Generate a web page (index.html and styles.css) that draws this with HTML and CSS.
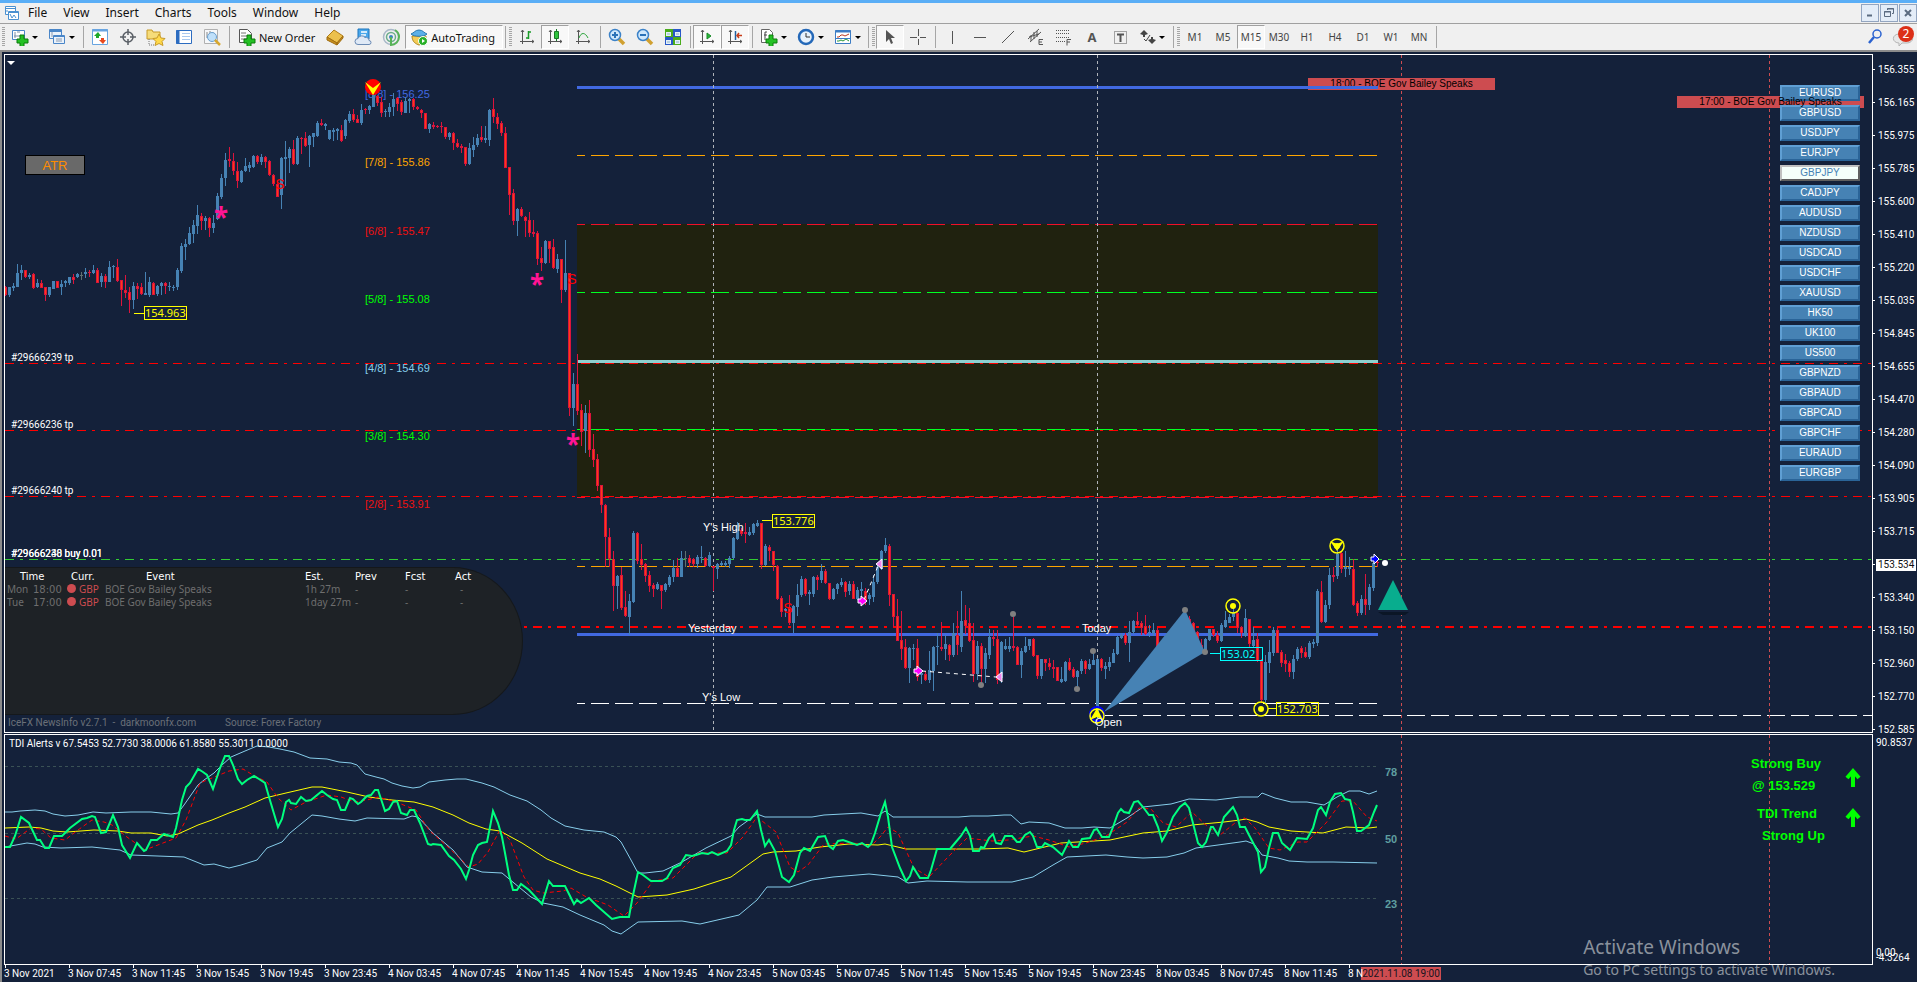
FILE: index.html
```html
<!DOCTYPE html>
<html lang="en">
<head>
<meta charset="utf-8">
<title>GBPJPY, M15</title>
<link rel="stylesheet" href="styles.css">
</head>
<body>
<header class="menubar">
  <svg class="app-icon" width="16" height="16" viewBox="0 0 16 16" fill="none" stroke="#4a90d0"><path d="M1.500 1.500h10v8h-10zM1 3.500h11" fill="#fff"/><path d="M4.500 6.500h10v8h-10z" fill="#fff"/><path d="M4.500 7.500h10M6 9l2 4 2-3 2 3M3 5v2"/></svg>
  <nav class="menu">
    <a href="#">File</a><a href="#">View</a><a href="#">Insert</a><a href="#">Charts</a><a href="#">Tools</a><a href="#">Window</a><a href="#">Help</a>
  </nav>
  <div class="window-buttons">
    <button aria-label="Minimize"><svg width="12" height="12"><path d="M3 8.500h5" stroke="#5b6b80" stroke-width="2"/></svg></button>
    <button aria-label="Restore"><svg width="12" height="12" fill="none" stroke="#5b6b80"><path d="M4.500 3V1.500h6v5H9M4 2h7M1.500 4.500h6v5h-6zM1 5h7"/></svg></button>
    <button aria-label="Close"><svg width="12" height="12"><path d="M3 3l6 6M9 3l-6 6" stroke="#5b6b80" stroke-width="2"/></svg></button>
  </div>
</header>

<div class="toolbar">
  <i class="grip"></i>
  <button class="tool drop" aria-label="New chart"><svg width="18" height="18"><path d="M1.500 2.500h12v9h-12z" fill="#fff" stroke="#4a86c8"/><path d="M4 4v6M3 8h7M6 4h3" stroke="#7a8ea8"/><path d="M9 7h4v4h4v4h-4v4H9v-4H6v-4h3z" fill="#24c024" stroke="#0a7a0a"/></svg></button>
  <button class="tool drop" aria-label="Profiles"><svg width="18" height="18" fill="#eaf2fb" stroke="#4a86c8"><path d="M1.500 1.500h12v9h-12z"/><path d="M1 3h13" stroke-width="2"/><path d="M5.500 7.500h11v8h-11z"/><path d="M5 8.500h12" /><path d="M4 4v5M8 11h6M8 13h6" stroke="#8a9ab0"/></svg></button>
  <i class="sep"></i>
  <button class="tool" aria-label="Market Watch"><svg width="18" height="18"><path d="M1.500 1.500h15v15h-15z" fill="#fff" stroke="#68a4e0"/><path d="M1 2.500h16" stroke="#68a4e0" stroke-width="2"/><path d="M7 4l3 4H8v2H5V8H3z" fill="#1fa82a"/><path d="M12 16l3-4h-2v-2h-3v2H8z" fill="#e8491e"/></svg></button>
  <button class="tool" aria-label="Data Window"><svg width="18" height="18" fill="none" stroke="#5a5f66" stroke-width="1.500"><circle cx="9" cy="9" r="5"/><path d="M9 1v6M9 11v6M1 9h6M11 9h6"/></svg></button>
  <button class="tool" aria-label="Navigator"><svg width="20" height="18"><path d="M1 5V2h5l1 2h7v7H1z" fill="#f6dc7a" stroke="#c79a28"/><path d="M3 11v6h5" stroke="#777" stroke-dasharray="1 1" fill="none"/><path d="M13 6l2 4 4 .5-3 3 1 4-4-2-4 2 1-4-3-3 4-.5z" fill="#ffd94a" stroke="#c79a28"/></svg></button>
  <button class="tool" aria-label="Terminal"><svg width="18" height="18"><path d="M1.500 2.500h15v13h-15z" fill="#fff" stroke="#2c6cc0"/><path d="M3 2v14" stroke="#2c6cc0" stroke-width="3"/><path d="M7 5.500h8M7 8.500h8M7 11.500h8" stroke="#a9c8ee"/></svg></button>
  <button class="tool" aria-label="Strategy Tester"><svg width="18" height="18"><path d="M1.500 1.500h13v14h-13z" fill="#f6f8fa" stroke="#b0b0b0"/><path d="M4 4v6M7 3v5M10 4v4" stroke="#888"/><circle cx="9" cy="9" r="4.500" fill="#bfe0fa" stroke="#6aa0d0"/><path d="M12 12l5 5" stroke="#d8a830" stroke-width="2.500"/></svg></button>
  <i class="sep"></i>
  <button class="tool wide"><svg width="18" height="18"><path d="M1.500 1.500h8l4 4v9h-12z" fill="#fff" stroke="#555"/><path d="M3 5h5M3 8h8M3 11h6" stroke="#777"/><path d="M9 7h4v4h4v4h-4v4H9v-4H6v-4h3z" fill="#24c024" stroke="#0a7a0a"/></svg>New Order</button>
  <button class="tool" aria-label="MetaEditor"><svg width="18" height="18"><path d="M1 9l7-7 9 6-6 7z" fill="#ecc04c" stroke="#b07c18"/><path d="M1 9v3l10 5v-2zM11 17l6-7V8l-6 7z" fill="#c8901e" stroke="#a06c10"/></svg></button>
  <button class="tool" aria-label="Market"><svg width="18" height="18"><path d="M4 1h11v10H4z" fill="#4aa8ec" stroke="#1c74bc"/><path d="M7 4h6M7 7h5" stroke="#fff" stroke-width="1.500"/><path d="M4 16.500a3 3 0 010-6 4 4 0 017-1 3 3 0 014 3 2 2 0 010 4z" fill="#dfe9f6" stroke="#6a8ab4"/></svg></button>
  <button class="tool" aria-label="Signals"><svg width="18" height="18" fill="none" stroke-width="1.500"><circle cx="9" cy="9" r="7.500" stroke="#a8b8c8"/><circle cx="9" cy="9" r="4.500" stroke="#6cae8c"/><circle cx="9" cy="9" r="2" fill="#3a80c0"/><path d="M9 9v8a8 8 0 008-8 8 8 0 00-4-7" stroke="#58b458" stroke-width="2"/></svg></button>
  <button class="tool wide auto pressed"><svg width="18" height="18"><path d="M2 8c0 6 4 8 7 9 4-1 7-4 7-9z" fill="#f4cc58" stroke="#b08820"/><path d="M1 6c3-1 4-4 8-4s5 3 8 4c-3 3-13 3-16 0z" fill="#5cb0e8" stroke="#2878b0"/><circle cx="13" cy="13" r="4.500" fill="#28b028" stroke="#fff"/><path d="M12 11v4l3-2z" fill="#fff"/></svg>AutoTrading</button>
  <i class="sep"></i>
  <i class="grip"></i>
  <button class="tool" aria-label="Bar chart"><svg width="16" height="16" fill="none" stroke="#555"><path d="M3.500 1v14M1 12.500h14M2 3l1.500-2L5 3M13 11l2 1.500-2 1.500"/><path d="M9.500 2v8M7 9h2.500M9.500 3H12" stroke="#1a9a28" stroke-width="1.500"/></svg></button>
  <button class="tool pressed" aria-label="Candlesticks"><svg width="16" height="16" fill="none" stroke="#555"><path d="M3.500 1v14M1 12.500h14M2 3l1.500-2L5 3M13 11l2 1.500-2 1.500"/><path d="M9.500 0v12" stroke="#1a7a28"/><path d="M7.500 2.500h4v7h-4z" fill="#2fc43c" stroke="#1a7a28"/></svg></button>
  <button class="tool" aria-label="Line chart"><svg width="16" height="16" fill="none" stroke="#555"><path d="M3.500 1v14M1 12.500h14M2 3l1.500-2L5 3M13 11l2 1.500-2 1.500"/><path d="M4 9c2-6 6-6 9 0" stroke="#2aa43a"/></svg></button>
  <i class="sep"></i>
  <button class="tool" aria-label="Zoom in"><svg width="18" height="18"><path d="M10 10l6 6" stroke="#d0a030" stroke-width="3.500"/><circle cx="7" cy="7" r="5.500" fill="#cfe8fc" stroke="#3c82c8" stroke-width="1.500"/><path d="M4 7h6M7 4v6" stroke="#2a72b8" stroke-width="2"/></svg></button>
  <button class="tool" aria-label="Zoom out"><svg width="18" height="18"><path d="M10 10l6 6" stroke="#d0a030" stroke-width="3.500"/><circle cx="7" cy="7" r="5.500" fill="#cfe8fc" stroke="#3c82c8" stroke-width="1.500"/><path d="M4 7h6" stroke="#2a72b8" stroke-width="2"/></svg></button>
  <button class="tool" aria-label="Tile windows"><svg width="18" height="18"><path d="M1 1h8v8H1zM9 9h8v8H9z" fill="#4aac1c"/><path d="M9 1h8v8H9zM1 9h8v8H1z" fill="#2858c8"/><path d="M2 4h5v4H2zM11 4h5v4h-5zM2 12h5v4H2zM11 12h5v4h-5z" fill="#e4f0fa"/><path d="M3 6h3M12 6h3M3 14h3M12 14h3" stroke="#8ab0c8"/></svg></button>
  <i class="sep"></i>
  <button class="tool pressed" aria-label="Auto scroll"><svg width="16" height="16" fill="none" stroke="#555"><path d="M3.500 1v14M1 12.500h14M2 3l1.500-2L5 3M13 11l2 1.500-2 1.500"/><path d="M8 4v6l4-3z" fill="#28b838" stroke="#1a8a28"/></svg></button>
  <button class="tool pressed" aria-label="Chart shift"><svg width="16" height="16" fill="none" stroke="#555"><path d="M3.500 1v14M1 12.500h14M2 3l1.500-2L5 3M13 11l2 1.500-2 1.500"/><path d="M8.500 2v9" stroke="#2060a0" stroke-width="1.500"/><path d="M15 6.500h-5M12 4l-2 2.500 2 2.500" stroke="#c83c18" stroke-width="1.500"/></svg></button>
  <i class="sep"></i>
  <button class="tool drop" aria-label="Indicators"><svg width="18" height="18"><path d="M1.500 1.500h8l3 3v10h-11z" fill="#fff" stroke="#666"/><path d="M7 4H5v8M4 7h3" stroke="#444" fill="none"/><path d="M9 7h4v4h4v4h-4v4H9v-4H6v-4h3z" fill="#24c024" stroke="#0a7a0a"/></svg></button>
  <button class="tool drop" aria-label="Periodicity"><svg width="18" height="18"><circle cx="9" cy="9" r="7" fill="#e8f2fc" stroke="#2468b8" stroke-width="2.500"/><path d="M9 5v4h4" stroke="#333" fill="none"/></svg></button>
  <button class="tool drop" aria-label="Templates"><svg width="18" height="18" fill="none"><path d="M1.500 2.500h15v13h-15z" fill="#fff" stroke="#3c7cc4"/><path d="M1 3.500h16" stroke="#3c7cc4" stroke-width="2"/><path d="M3 9h2l2-2h2l2 1 4-2" stroke="#b83820"/><path d="M3 13h2l2-1 2 1 3-2 3 2" stroke="#289838"/><path d="M2 10.500h14" stroke="#3c7cc4"/></svg></button>
  <i class="sep"></i>
  <i class="grip"></i>
  <button class="tool pressed" aria-label="Cursor"><svg width="16" height="16"><path d="M4 1v12l3-3 2 5 2-1-2-5h4z" fill="#555"/></svg></button>
  <button class="tool" aria-label="Crosshair"><svg width="16" height="16" stroke="#555"><path d="M8.500 0v7M8.500 10v6M0 8.500h7M10 8.500h6"/></svg></button>
  <i class="sep"></i>
  <button class="tool" aria-label="Vertical line"><svg width="16" height="16" stroke="#555"><path d="M8.500 2v13"/></svg></button>
  <button class="tool" aria-label="Horizontal line"><svg width="16" height="16" stroke="#555"><path d="M2 8.500h12"/></svg></button>
  <button class="tool" aria-label="Trendline"><svg width="16" height="16" stroke="#555"><path d="M2 14L14 2"/></svg></button>
  <button class="tool" aria-label="Channel"><svg width="17" height="18" stroke="#555" fill="none"><path d="M1 11L12 1M3 14L14 4M4 7v6M7 4v7M10 3v6M2 9l10-3"/><path d="M16 11.500h-4v5h4M12 14h3"/></svg></button>
  <button class="tool" aria-label="Fibonacci"><svg width="17" height="18" stroke="#555" fill="none"><path d="M1 2.500h14M1 5.500h14M1 9.500h14M1 13.500h9" stroke-dasharray="1 1"/><path d="M16 11.500h-4v6M12 14h3"/></svg></button>
  <button class="tool letter">A</button>
  <button class="tool" aria-label="Text label"><svg width="16" height="16" stroke="#555" fill="none"><path d="M2.500 2.500h12v12h-12z" stroke-dasharray="1 1"/><path d="M5 5.500h7M8.500 5v8" stroke-width="2"/></svg></button>
  <button class="tool drop" aria-label="Arrows"><svg width="16" height="16" fill="#444"><path d="M0 5l4-4 4 4-3 1v2H3V6zM8 11l3-1V8h2v2l3 1-4 4z"/><path d="M4 10l2 2 4-6" fill="none" stroke="#444"/></svg></button>
  <i class="sep"></i>
  <i class="grip"></i>
  <button class="tool period">M1</button><button class="tool period">M5</button><button class="tool period pressed">M15</button><button class="tool period">M30</button><button class="tool period">H1</button><button class="tool period">H4</button><button class="tool period">D1</button><button class="tool period">W1</button><button class="tool period">MN</button>
  <i class="sep"></i>
  <div class="status">
    <button class="plain" aria-label="Search"><svg width="16" height="16" fill="none" stroke="#2a62d0"><circle cx="10" cy="5" r="4" stroke-width="1.500"/><path d="M7 8l-5 6" stroke-width="2.500"/></svg></button>
    <button class="plain" aria-label="Messages"><svg width="26" height="22"><path d="M8 20v-3a5 4 0 010-9h8a5 4 0 010 9h-5z" fill="#e8e8e8" stroke="#b4b4b4"/><circle cx="15" cy="8" r="8" fill="#dc3018"/><text class="badge" x="15" y="12">2</text></svg></button>
  </div>
</div>

<main class="workspace">
  <section class="pane main-pane">
    <div class="event event-today"><span>18:00 - BOE Gov Bailey Speaks</span></div>
    <svg class="plot"><g transform="translate(-5 -55)">
      <rect x="577" y="224" width="801" height="273" fill="#20220f"/>
      <g class="crisp" fill="none">
        <g class="dashdot">
          <path d="M5 363H1872M5 430H1872M5 496H1872" stroke="#f00"/>
          <path d="M5 559H1872" stroke="#32cd32"/>
          <path d="M5 627H1872" stroke="#f00" stroke-width="2"/>
        </g>
        <g class="levels">
          <path d="M577 155H1378M577 566H1378" stroke="#ffa500"/>
          <path d="M577 224H1378M577 497H1378" stroke="#f01028"/>
          <path d="M577 292H1378M577 429H1378" stroke="#0f2"/>
          <path d="M577 703H1378M1105 715H1872" stroke="#fff"/>
        </g>
        <path class="solid" d="M577 87H1378M577 634H1378" stroke="#4169e1"/>
        <path class="solid" d="M577 361H1378" stroke="#8fcfcf"/>
        <path class="day" d="M713 55V732M1097 55V732" stroke="#b0b4ba"/>
        <path class="day" d="M1401 55V732M1769 55V732" stroke="#cd4c50"/>
      </g>
      <g class="level-text">
        <text x="365" y="98" fill="#4169e1">[8/8] - 156.25</text>
        <text x="365" y="166" fill="#ffa500">[7/8] - 155.86</text>
        <text x="365" y="235" fill="#f01010">[6/8] - 155.47</text>
        <text x="365" y="303" fill="#0f0">[5/8] - 155.08</text>
        <text x="365" y="372" fill="#87ceeb">[4/8] - 154.69</text>
        <text x="365" y="440" fill="#0f0">[3/8] - 154.30</text>
        <text x="365" y="508" fill="#f01010">[2/8] - 153.91</text>
      </g>
      <g id="candles" class="crisp"></g>
      <path d="M1185 610L1205 652L1104 712z" fill="#4682b4"/>
      <g class="crisp" fill="none" stroke="#ff0">
        <path d="M134 313h10M144 306h42v13h-42zM762 520h10M772 514h42v13h-42zM1268 708h8M1276 702h42v13h-42z"/>
        <path d="M1210 653h10M1220 647h42v13h-42z" stroke="#0ff"/>
      </g>
      <g class="tag" fill="#ff0">
        <text x="145" y="317">154.963</text><text x="773" y="525">153.776</text><text x="1277" y="713">152.703</text>
        <text x="1221" y="658" fill="#0ff">153.02</text>
      </g>
      <g class="star"><text x="221" y="227">*</text><text x="537" y="294">*</text><text x="573" y="454">*</text></g>
      <g class="sell"><text x="280" y="189">S</text><text x="572" y="284">S</text><text x="788" y="613">S</text></g>
      <circle cx="373" cy="87" r="8" fill="#f00"/><path d="M365 82l8 13 8-13-8 6z" fill="#ff0"/>
      <g fill="none" stroke="#fff" stroke-dasharray="4 4"><path d="M864 600L878 566M922 671L996 677"/></g>
      <g fill="#f0f" stroke="#fff"><path d="M858 599h3v-3l6 5-6 5v-3h-3zM914 669h3v-3l6 5-6 5v-3h-3z"/>
        <path d="M882 559v10l-6-5zM1002 672v10l-6-5z" fill="#ee82ee"/><path d="M1371 557h3v-3l5 5-5 5v-3h-3z" fill="#00f"/></g>
      <g fill="#808080"><circle cx="1013" cy="614" r="3"/><circle cx="981" cy="685" r="3"/><circle cx="1093" cy="651" r="3"/><circle cx="1077" cy="689" r="3"/><circle cx="1185" cy="610" r="3"/><circle cx="1205" cy="652" r="3"/></g>
      <circle cx="1097" cy="714" r="7" fill="none" stroke="#00f" stroke-width="2"/>
      <g fill="none" stroke="#ff0" stroke-width="1.500"><circle cx="1233" cy="606" r="7"/><circle cx="1261" cy="709" r="7"/><circle cx="1337" cy="546" r="7"/><circle cx="1097" cy="716" r="7"/></g>
      <g fill="#ff0"><circle cx="1233" cy="606" r="3"/><circle cx="1261" cy="709" r="3"/><circle cx="1337" cy="546" r="3"/><path d="M1330 541l7 10 7-10-7 3zM1090 720l7-12 6 12-6-3z"/></g>
      <circle cx="1385" cy="563" r="3" fill="#fff"/>
      <path d="M1378 612h31l-4 3h-22z" fill="#0b1626"/><path d="M1378 610l15-30 15 30z" fill="#08ad8e"/>
      <path d="M7 61h8l-4 4z" fill="#fff"/>
      <g class="note">
        <text x="703" y="531">Y's High</text><text x="688" y="632">Yesterday</text><text x="702" y="701">Y's Low</text><text x="1082" y="632">Today</text><text x="1095" y="726">Open</text>
      </g>
      <g class="order">
        <text x="11" y="361">#29666239 tp</text><text x="11" y="428">#29666236 tp</text><text x="11" y="494">#29666240 tp</text><text x="11" y="557">#29666238 buy 0.01</text><text x="11" y="557">#29666240 buy 0.01</text>
      </g>
    </g></svg>

    <button class="atr">ATR</button>

    <div class="news">
      <table>
        <colgroup><col class="w-day"><col class="w-clock"><col class="w-cur"><col class="w-event"><col class="w-num"><col class="w-num"><col class="w-num"><col></colgroup>
        <thead><tr><th class="c-time" colspan="2">Time</th><th class="c-cur">Curr.</th><th class="c-event">Event</th><th>Est.</th><th>Prev</th><th>Fcst</th><th>Act</th></tr></thead>
        <tbody>
          <tr><td>Mon</td><td class="clock">18:00</td><td class="cur"><i></i>GBP</td><td>BOE Gov Bailey Speaks</td><td>1h 27m</td><td>-</td><td>-</td><td class="act">-</td></tr>
          <tr><td>Tue</td><td class="clock">17:00</td><td class="cur"><i></i>GBP</td><td>BOE Gov Bailey Speaks</td><td>1day 27m</td><td>-</td><td>-</td><td class="act">-</td></tr>
        </tbody>
      </table>
    </div>
    <div class="news-source"><span>IceFX NewsInfo v2.7.1 &nbsp;-&nbsp; darkmoonfx.com</span><span>Source: Forex Factory</span></div>

    <div class="event event-next"></div>
    <div class="event-name"><span>17:00 - BOE Gov Bailey Speaks</span></div>

    <div class="symbols">
      <button>EURUSD</button><button>GBPUSD</button><button>USDJPY</button><button>EURJPY</button><button class="active">GBPJPY</button><button>CADJPY</button><button>AUDUSD</button><button>NZDUSD</button><button>USDCAD</button><button>USDCHF</button><button>XAUUSD</button><button>HK50</button><button>UK100</button><button>US500</button><button>GBPNZD</button><button>GBPAUD</button><button>GBPCAD</button><button>GBPCHF</button><button>EURAUD</button><button>EURGBP</button>
    </div>
  </section>

  <div class="price-axis">
    <span>156.355</span><span>156.165</span><span>155.975</span><span>155.785</span><span>155.600</span><span>155.410</span><span>155.220</span><span>155.035</span><span>154.845</span><span>154.655</span><span>154.470</span><span>154.280</span><span>154.090</span><span>153.905</span><span>153.715</span><span class="current"><b>153.534</b></span><span>153.340</span><span>153.150</span><span>152.960</span><span>152.770</span><span>152.585</span>
  </div>

  <section class="pane tdi-pane">
    <svg class="plot"><g transform="translate(-5 -735)">
      <g class="crisp" fill="none">
        <path d="M5 766H1377M5 833H1377M5 898H1377" stroke="#3a5155" stroke-dasharray="3 3"/>
        <path class="day" d="M1401 735V964M1769 735V964" stroke="#cd4c50"/>
      </g>
      <g id="tdi" fill="none"></g>
      <text class="order" x="9" y="747">TDI Alerts v 67.5453 52.7730 38.0006 61.8580 55.3011 0.0000</text>
      <g class="tdi-level"><text x="1385" y="776">78</text><text x="1385" y="843">50</text><text x="1385" y="908">23</text></g>
      <g class="signal"><text x="1751" y="768">Strong Buy</text><text x="1752" y="790">@ 153.529</text><text x="1757" y="818">TDI Trend</text><text x="1762" y="840">Strong Up</text></g>
      <path d="M1853 772v15M1847 778l6-7 6 7M1853 812v15M1847 818l6-7 6 7" fill="none" stroke="#0f0" stroke-width="4"/>
    </g></svg>
  </section>

  <div class="tdi-axis"><span>90.8537</span><span class="zero">0.00</span><span class="low">-4.3264</span></div>

  <div class="time-axis">
    <span>3 Nov 2021</span><span>3 Nov 07:45</span><span>3 Nov 11:45</span><span>3 Nov 15:45</span><span>3 Nov 19:45</span><span>3 Nov 23:45</span><span>4 Nov 03:45</span><span>4 Nov 07:45</span><span>4 Nov 11:45</span><span>4 Nov 15:45</span><span>4 Nov 19:45</span><span>4 Nov 23:45</span><span>5 Nov 03:45</span><span>5 Nov 07:45</span><span>5 Nov 11:45</span><span>5 Nov 15:45</span><span>5 Nov 19:45</span><span>5 Nov 23:45</span><span>8 Nov 03:45</span><span>8 Nov 07:45</span><span>8 Nov 11:45</span><span class="cut">8 N</span><b>2021.11.08 19:00</b>
  </div>
</main>

<aside class="activation"><strong>Activate Windows</strong><span>Go to PC settings to activate Windows.</span></aside>
<script src="chart.js"></script>
</body>
</html>
```

FILE: styles.css
```css
:root {
  --bg: #14213a;
  --narrow: Roboto, "Noto Sans", sans-serif;
  --ui: "Noto Sans", "Open Sans", sans-serif;
  --arial: "Liberation Sans", Arial, sans-serif;
}
* { box-sizing: border-box; }
body { margin: 0; height: 100vh; display: flex; flex-direction: column; overflow: hidden; background: var(--bg); font: 12px var(--ui); }
button { font: inherit; margin: 0; padding: 0; border: 0; background: none; color: inherit; }

.menubar { flex: none; height: 24px; display: flex; align-items: center; border-top: 3px solid #5aaef6; border-bottom: 1px solid #a0a0a0; background: #f0f0f0; }
.app-icon { margin-left: 4px; }
.menu { display: flex; gap: 16px; margin-left: 8px; }
.menu a { color: #111; text-decoration: none; line-height: 18px; }
.window-buttons { display: flex; gap: 1px; margin-left: auto; }
.window-buttons button { width: 18px; height: 18px; display: grid; place-items: center; border: 1px solid #93a5c0; background: #e4edf8; }

.toolbar { flex: none; height: 28px; display: flex; align-items: center; background: #f0f0f0; border-bottom: 2px solid #8c8c8c; color: #111; }
.grip { flex: none; width: 3px; height: 20px; margin: 0 1px 0 2px; background: repeating-linear-gradient(#a6a6a6 0 1px, #f0f0f0 1px 2px); }
.sep { flex: none; width: 1px; height: 22px; margin: 0 2px 0 3px; background: #a6a6a6; }
.sep:has(+ .grip) { margin: 0 1px 0 2px; }
.tool { flex: none; width: 28px; height: 24px; display: flex; align-items: center; justify-content: center; border: 1px solid transparent; }
.tool.drop { width: 37px; gap: 3px; }
.tool.drop::after { content: ""; border: 3px solid transparent; border-top-color: #000; border-bottom: 0; }
.tool.wide { width: auto; gap: 3px; padding: 0 5px; font-size: 11px; }
.tool.auto { padding: 0 7px 0 4px; }
.tool.pressed { background: #f8f8f8; border-color: #a0a0a0 #fff #fff #a0a0a0; }
.tool.period { font-size: 10px; color: #444; }
.tool.letter { font: bold 13px var(--ui); color: #555; }
.status { display: flex; align-items: center; gap: 8px; margin-left: auto; }
.plain { display: flex; }
.badge { font: 12px var(--ui); fill: #fff; text-anchor: middle; }

.workspace { flex: 1; min-height: 0; display: grid; grid-template-columns: minmax(0, 1fr) 44px; grid-template-rows: minmax(0, 680fr) minmax(0, 231fr) 17px; padding: 2px 0 0 2px; border-left: 2px solid #8c8c8c; color: #fff; }
.pane { position: relative; overflow: hidden; border: 1px solid #fff; }
.main-pane { margin-bottom: 1px; }
.plot { position: absolute; inset: 0; width: 100%; height: 100%; }
.crisp { shape-rendering: crispEdges; }
.dashdot { stroke-dasharray: 9 6 3 6; }
.levels { stroke-dasharray: 18 6; stroke-dashoffset: 10; }
.solid { stroke-width: 3; }
.day { stroke-dasharray: 3 3; }
.level-text { font: 11px var(--arial); }
.tag { font: 11px var(--ui); }
.star { font: bold 26px var(--ui); fill: #ff1493; text-anchor: middle; }
.sell { font: 14px var(--arial); fill: #f00; text-anchor: middle; }
.note { font: 11px var(--arial); fill: #fff; }
.order { font: 10px var(--narrow); fill: #fff; }
.tdi-level { font: bold 11px var(--arial); fill: #5f9ea0; }
.signal { font: 900 13px var(--arial); fill: #0f0; }
#candles .b { fill: #4682b4; }
#candles .r { fill: #dc143c; }
#candles .g { fill: #607070; }
#candles .core { fill: #ff3d14; }

.atr { position: absolute; left: 20px; top: 100px; width: 60px; height: 20px; border: 1px solid #000; background: #696969; color: #ff8c00; font: 13px var(--arial); }

.news { position: absolute; left: 0; bottom: 17px; width: 518px; height: 148px; padding-top: 2px; border: 1px solid #15181b; border-left: 0; border-radius: 0 70px 70px 0 / 0 74px 74px 0; background: #1e2226; }
.news table { width: 490px; border-collapse: collapse; table-layout: fixed; font: 10px/13px var(--ui); color: #6e6e6e; }
.news th, .news td { padding: 0; text-align: left; font-weight: 400; white-space: nowrap; }
.news th { font-family: "DejaVu Sans", sans-serif; color: #fff; }
.news td:first-child { padding-left: 2px; }
.news .clock { font-family: "DejaVu Sans", sans-serif; }
.w-day { width: 28px; }
.w-clock { width: 32px; }
.w-cur { width: 40px; }
.w-event { width: 200px; }
.w-num { width: 50px; }
.news .c-time { padding-left: 15px; }
.news .c-cur { padding-left: 6px; }
.news .c-event { padding-left: 41px; }
.news .act { padding-left: 5px; }
.news .cur { color: #cd4c50; }
.news .cur i { display: inline-block; width: 9px; height: 9px; margin: 0 3px 0 2px; border-radius: 50%; background: #cd4c50; }
.news-source { position: absolute; left: 3px; bottom: 2px; display: flex; font: 10px/14px var(--narrow); color: #6a7078; }
.news-source span:first-child { width: 217px; }

.event { position: absolute; width: 187px; height: 12px; background: #cd4c50; color: #000; }
.event span, .event-name span { display: block; text-align: center; font: 10px/12px var(--arial); color: #000; }
.event-today { left: 1303px; top: 23px; }
.event-next, .event-name { right: 8px; top: 41px; width: 187px; }
.event-name { position: absolute; z-index: 2; pointer-events: none; }
.symbols { position: absolute; z-index: 1; right: 12px; top: 30px; display: flex; flex-direction: column; gap: 4px; }
.symbols button { width: 80px; height: 16px; border: 2px solid; border-color: #5f9fd4 #2a6498 #2a6498 #5f9fd4; background: #4682b4; color: #fff; font: 10px/12px var(--arial); }
.symbols .active { background: #f5fffa; color: #4682b4; border-color: #c0c0c0 #606060 #606060 #c0c0c0; }

.price-axis { display: flex; flex-direction: column; margin: -1px 0 -12px; font: 10px var(--narrow); }
.price-axis span { flex: 1; display: flex; align-items: center; gap: 3px; }
.price-axis span::before { content: ""; width: 2px; height: 1px; background: #fff; }
.price-axis b { font-weight: 400; line-height: 12px; background: #fff; color: #111; padding: 0 2px; margin-left: -2px; }
.tdi-axis { position: relative; font: 10px/12px var(--narrow); padding: 3px 0 0 3px; }
.tdi-axis .zero, .tdi-axis .low { position: absolute; left: 3px; bottom: 6px; }
.tdi-axis .low { bottom: 1px; }
.time-axis { grid-column: 1 / -1; display: flex; align-items: center; position: relative; overflow: hidden; font: 10px/14px var(--narrow); }
.time-axis span { flex: none; position: relative; width: 64px; white-space: nowrap; }
.time-axis span::before { content: ""; position: absolute; left: 1px; top: -2px; width: 1px; height: 3px; background: #fff; }
.time-axis .cut { width: 13px; }
.time-axis b { width: 80px; line-height: 13px; text-align: center; font-weight: 400; background: #cd4c50; color: #14141e; white-space: nowrap; }

.activation { position: absolute; right: 82px; bottom: 2px; display: flex; flex-direction: column; color: #8a919c; font: 14px/20px var(--ui); }
.activation strong { font-weight: 400; font-size: 19px; line-height: 26px; }
```

FILE: chart.js
```js
const NS = 'http://www.w3.org/2000/svg';

function add(parent, name, attrs) {
  const el = document.createElementNS(NS, name);
  for (const key in attrs) el.setAttribute(key, attrs[key]);
  parent.appendChild(el);
  return el;
}

// Candles: kind, high, body top, body bottom, low. Values are thirds of a
// pixel below `top`; bars are four pixels apart.
const runs = [
  { first: 0, top: 50, bars: `r708 710 736 738,b710 712 735 740,b698 708 714 722,b642 668 710 712,b645 660 670 690,r660 660 682 685,b668 674 682 688,r668 672 714 716,b688 698 712 715,r690 700 714 715,r710 712 736 752,b710 712 736 740,b692 693 716 717,r692 693 713 715,b690 703 712 735,b690 694 700 712,b680 682 700 705,r672 682 690 703,b670 672 682 684,g665 674 676 690,b655 666 673 685,r660 665 668 682,b645 660 668 672,r655 660 698 700,b670 678 696 710,r672 678 696 715,b633 650 695 696,b645 647 652 684,r627 652 692 696,r690 690 720 768,r675 720 728 745,r712 725 750 790,b696 708 750 776,r698 708 718 748,r700 712 732 735,b665 730 735 736,b680 697 736 740,r695 700 734 735,b705 707 733 738,b696 698 708 735,r697 700 708 733,b697 708 712 722,b705 711 713 722,b655 660 711 721,b580 588 662 670,b568 582 590 630,b530 550 582 584,b510 525 552 580,b465 495 527 553,r488 497 512 540,b498 503 512 541,r500 503 535 562,b495 518 534 548,b428 438 508 510,b373 383 441 446,b308 330 385 408,r291 328 334 350,r310 332 364 375,r335 363 392 413,b360 362 396 400,b325 348 362 365,b335 345 355 367,b315 317 352 354,r315 318 337 342,b312 320 336 345,r318 320 335 354,r330 333 376 378,r372 375 402 408,r400 401 440 441,b321 323 435 476,b273 320 326 408,b290 296 323 368,r269 297 342 345,b258 264 342 344,r262 264 266 313,r246 264 288 292,b255 258 286 350,b248 250 262 292,b212 218 258 260,r207 218 226 228,b218 223 227 240,b240 241 266 270,b233 240 245 273,b233 236 242 269,r226 240 274 276,b208 210 257 266,b184 192 212 218,r178 192 210 215,r196 208 218 219,b162 180 218 224,r174 176 181 192,b165 168 180 192,b130 136 170 172,r136 138 158 167,r140 156 188 200,b178 182 186 202,b160 170 186 200,b130 146 170 198,r140 145 162 184,r150 155 186 196,b140 154 188 190,b145 147 154 188,r145 148 172 180,r168 170 177 181,r178 180 190 205,r190 190 236 238,b220 222 237 248,r217 225 230 238,r225 228 232 234,r217 228 232 250,r230 230 262 268,b246 248 262 270,r246 248 280 300,r268 280 290 294,r282 288 293 308,r290 290 342 348,b280 293 342 345,b262 284 300 320,b252 264 284 290,r228 262 270 276,b228 264 270 280,b178 180 270 287,r144 178 202 220,r188 200 222 238,r214 220 250 258,r232 248 353 355,r350 352 434 496,r418 430 514 524,b474 476 514 558,r470 477 497 502,r497 500 514 560,r487 510 550 560,r510 546 552 560,r543 548 628 645,r592 625 638 662,b570 572 640 642,r572 573 596 640,r568 590 654 658` },
  { first: 138, top: 210, bars: `b132 147 177 190,r147 147 240 278,b90 189 240 246,r189 189 594 618,b488 522 594 648,r432 522 603 614,r582 600 666 708,b585 609 662 728,r570 609 720 740,r672 717 750 770,r732 747 828 842` },
  { first: 149, top: 480, bars: `r15 15 76 98,r72 74 172 262,r144 172 238 262,r212 236 318 392,b285 288 318 388,r262 285 384 390,r333 381 408 412,b343 364 410 466,b153 158 366 370,r155 160 242 252,r192 237 255 270,r250 252 287 306,r273 285 317 335,r310 315 327 352,b305 312 327 330,r315 315 333 387,b310 312 330 336,b286 292 315 322,b240 263 292 305,r235 264 290 292,b214 235 290 292,g213 235 237 262,r225 234 250 262,r233 236 252 262,b225 232 252 265,b198 231 234 250,r232 234 258 260,b216 225 258 260,r258 259 265 332,b250 252 266 296,b243 250 256 258,b242 248 256 260,b228 234 252 264,b172 174 234 236,b126 148 178 180,r145 150 162 168,r128 156 162 188,b140 156 164 168,b128 132 160 164,b120 129 138 140,r128 129 255 267,b192 198 255 258,r196 200 214 244,r212 213 256 272,r255 258 357 360,r348 354 396 410,b383 388 392 410,r345 382 428 434,b375 378 430 460,b312 345 380 408,b288 297 346 350,r295 297 343 348,b330 336 342 376,b288 291 343 352,r285 290 300 330,b253 273 300 308,r266 272 310 312,r308 310 358 360,b325 326 358 360,b308 312 328 342,b295 306 315 320,r303 307 336 352,b304 312 334 345,r304 312 357 358,b322 330 358 360,b306 328 332 350,r325 333 360 376,b340 345 358 374,b285 306 350 365,b250 262 306 312,b210 213 268 270,b174 195 213 218,r192 198 345 377,r342 343 410 440,r357 408 482 484,r393 480 508 540,r478 502 564 566,b500 504 564 608,b492 503 506 540,r476 504 592 602,b570 580 585 612,r572 582 600 604,b512 570 600 610,b498 501 573 632,b458 498 502 556,r426 500 508 512,b465 492 508 540,r493 495 525 542,b430 460 524 532,r393 465 495 525,b333 423 500 516,r376 420 438 462,r384 430 483 486,r428 480 582 605,b484 498 582 600,r490 498 568 608,b504 520 568 608,b448 472 524 536,r450 472 478 498,r450 478 600 612,b484 487 595 608,b478 498 506 510,b472 498 506 515,r412 498 504 512,r498 502 554 556,b505 514 554 594,b470 498 516 518,b476 477 498 510,r475 477 528 530,r524 526 587 596,b536 538 588 598,r537 538 550 574,r535 548 562 570,r540 560 568 594,r560 562 602 604,b562 598 606 608,b543 545 604 606,r534 546 570 572,r562 566 592 594,b570 572 592 626,b536 544 574 582,r540 543 566 582,b538 552 568 570,b514 540 554 556,b534 536 700 702,r534 536 564 572,b545 558 566 598,b532 545 562 572,b508 520 548 550,b468 472 522 526,b460 464 474 476,r458 464 488 494,b422 456 488 546,b420 424 456 462,r396 423 434 440,r424 428 444 464,r404 438 462 464,b436 456 460 470,b430 450 460 468,r444 450 510 522,r488 504 514 524` },
  { first: 296, top: 480, bars: `r408 416 432 452,r426 428 458 460,r452 456 496 504,r478 494 508 512,b474 476 514 516,b446 447 480 482,r446 447 466 470,r452 465 484 488,b430 436 482 486,b392 420 440 444,b402 410 428 430,b380 396 412 424,r396 398 444 458,r438 440 458 474,b386 414 468 472,r416 418 492 505,b440 480 498 505,r458 476 542 546,r538 542 660 668,b524 545 660 668,b480 515 548 580,b442 450 518 528,r444 450 518 520,r510 516 548 560,r522 540 552 575,r542 548 576 590,b524 536 576 596,b502 506 538 542,r498 505 518 535,r502 516 530 534,b484 488 532 538,b476 486 492 505,b328 333 488 498,r304 336 426 430,b360 374 426 430,b264 285 376 388,r262 285 290 306,b210 222 288 298,r212 218 266 278,b214 262 268 290,b232 260 266 286,r238 266 374 378,r362 370 398 407,b345 358 398 405,r283 358 376 406,b312 320 374 390,b246 248 324 332,r244 246 250 262` },
];

const candles = document.getElementById('candles');
for (const run of runs) {
  run.bars.split(',').forEach((bar, n) => {
    const kind = bar[0];
    const [high, top, bottom, low] = bar.slice(1).split(' ').map(v => run.top + Math.round(v / 3));
    const x = 5 + 4 * (run.first + n);
    const body = Math.max(1, bottom - top);
    add(candles, 'rect', { class: kind, x, y: high, width: 1, height: low - high });
    add(candles, 'rect', { class: kind, x: x - 1, y: top, width: 3, height: body });
    if (kind === 'r' && body > 2) add(candles, 'rect', { class: 'core', x, y: top + 1, width: 1, height: body - 2 });
  });
}

// Indicator curves: three stretches, each with its own origin and x scale.
const stretches = [{ x: 0, k: 2.45 }, { x: 600, k: 2.45 }, { x: 1200, k: 2.187 }];
const curves = [
  { color: '#87ceeb', width: 1, parts: [
    '12,245 30,246 50,242 85,239 110,242 130,252 160,257 190,256 228,246 260,249 320,245 370,245 420,253 436,248 450,225 485,165 500,150 525,130 545,105 565,80 600,62 630,48 660,50 685,58 720,66 760,84 800,86 830,95 860,98 875,106 895,132 920,140 940,148 960,160 985,168 1012,175 1030,170 1050,157 1090,149 1120,148 1142,146 1180,160 1210,170 1250,195 1290,212 1325,240 1350,265 1385,288 1430,300 1480,307 1510,322',
    '52,335 75,390 92,428 110,430 155,423 200,395 260,353 320,318 340,292 385,253 405,260 480,261 520,262 550,254 640,248 680,258 698,244 718,260 830,261 880,262 910,257 950,258 990,254 1008,256 1032,283 1050,277 1100,280 1140,295 1180,295 1210,290 1250,293 1290,265 1330,232 1400,222 1442,206 1510,211 1568,202',
    '126,202 135,190 165,205 200,216 235,217 272,226 300,200 325,184 350,184 370,192 388,184'] },
  { color: '#87ceeb', width: 1, parts: [
    '12,350 65,340 85,343 105,352 150,355 225,352 295,360 320,376 450,380 500,404 525,403 562,414 590,405 630,390 655,355 690,335 710,308 765,256 790,257 830,268 870,273 900,265 990,267 1010,258 1025,262 1060,310 1110,360 1145,412 1180,427 1230,428 1260,460 1300,500 1330,520 1380,532 1420,556 1480,584',
    '30,604 52,613 92,575 200,574 245,582 340,556 385,510 408,472 465,470 520,450 570,442 660,433 730,440 755,459 800,454 900,456 1010,456 1060,440 1110,405 1145,380 1240,375 1290,380 1330,385 1390,382 1430,370 1460,355 1568,337',
    '100,333 118,342 135,376 170,385 195,394 235,396 290,397 388,398'] },
  { color: '#ffff00', width: 1, parts: [
    '12,295 70,290 100,294 130,303 165,306 230,299 290,302 320,310 370,310 410,317 435,312 485,285 520,270 560,250 600,232 650,205 700,190 765,170 790,171 850,185 905,202 960,210 1015,215 1060,230 1110,256 1150,280 1190,297 1225,302 1280,340 1340,387 1420,430 1470,446',
    '40,468 92,502 165,496 230,478 320,440 400,372 425,365 480,363 540,350 610,343 680,346 698,341 750,358 830,358 890,356 930,358 1000,355 1040,365 1130,340 1250,331 1330,310 1390,302 1450,284 1530,276 1568,270',
    '100,268 125,277 150,290 200,304 270,310 320,290 370,294 388,292'] },
  { color: '#ff0000', width: 1, dash: '4 3', parts: [
    '12,319 40,326 75,295 100,296 125,325 160,330 190,300 225,270 255,275 275,285 310,320 355,360 400,338 430,325 455,270 490,160 520,145 560,122 595,116 620,135 655,155 680,205 712,240 750,215 800,196 835,200 870,215 900,210 925,200 970,215 1020,240 1050,300 1100,355 1150,410 1170,402 1195,365 1225,300 1250,330 1285,440 1305,480 1330,490 1380,482 1400,475 1440,505 1470,515',
    '20,525 60,558 90,520 130,453 180,445 240,370 310,370 350,320 385,262 430,305 465,410 485,425 510,405 550,342 620,340 665,348 685,320 705,290 730,310 770,415 805,440 850,385 900,325 960,332 1000,330 1060,318 1100,330 1150,352 1190,340 1240,318 1290,275 1320,235 1350,238 1380,280 1410,290 1450,245 1490,290 1520,315 1568,268',
    '98,265 120,295 150,355 175,360 215,335 235,337 275,280 310,212 335,212 365,262 388,272'] },
  { color: '#00ff7f', width: 2, parts: [
    '12,350 24,350 36,318 52,260 70,280 90,330 98,330 110,354 120,354 132,318 152,318 172,295 200,266 212,265 226,257 232,260 247,308 260,307 278,254 288,290 298,345 318,384 336,338 352,362 358,360 370,331 385,331 402,312 425,321 432,295 445,210 455,170 465,158 484,118 498,126 506,135 522,178 540,115 552,78 562,78 572,105 582,148 592,162 605,150 622,137 634,146 650,160 660,200 680,291 690,268 700,215 709,210 714,220 726,222 738,200 750,212 762,210 788,182 800,195 815,208 826,210 836,240 845,241 858,204 866,206 876,222 885,215 900,197 910,196 918,180 926,180 935,215 944,243 952,238 964,216 972,214 982,250 996,254 1004,240 1014,240 1030,280 1048,343 1056,344 1062,342 1080,345 1100,378 1112,390 1130,418 1142,447 1150,420 1160,375 1172,346 1180,338 1192,335 1200,290 1208,242 1220,280 1230,320 1238,370 1248,435 1258,480 1266,480 1276,462 1295,480 1328,522 1346,454 1356,468 1384,468 1406,522 1414,510 1424,518 1444,503 1460,526 1500,566 1520,560 1540,560 1548,510 1562,425',
    '105,435 125,453 152,454 165,445 180,415 195,405 210,374 225,377 235,376 250,368 264,371 275,366 290,374 310,364 320,345 328,300 336,270 348,267 355,270 368,270 385,242 395,300 405,348 415,330 428,362 445,442 463,457 475,435 490,368 500,354 515,362 535,322 552,318 562,348 572,356 584,332 596,330 630,346 642,338 656,350 664,342 674,310 688,250 698,215 706,260 716,350 735,415 750,452 760,438 768,410 785,443 803,443 812,420 825,357 858,358 870,340 885,318 896,293 906,318 915,362 928,362 934,350 942,355 952,325 963,312 970,340 982,341 992,318 1010,318 1022,335 1030,335 1042,315 1053,306 1062,318 1070,350 1084,352 1090,340 1110,352 1131,375 1150,332 1160,350 1172,350 1182,326 1200,324 1210,300 1218,297 1230,322 1247,322 1258,290 1268,250 1277,238 1285,246 1297,248 1308,216 1318,212 1330,230 1345,254 1355,254 1366,290 1376,332 1390,305 1405,262 1420,232 1434,220 1444,235 1456,290 1466,338 1474,352 1484,335 1496,292 1502,290 1514,314 1530,262 1551,232',
    '80,255 88,292 98,292 108,315 126,365 134,427 142,410 150,355 160,310 170,308 180,340 196,361 212,325 234,327 248,295 258,240 265,232 275,255 285,215 295,192 308,190 318,208 328,210 335,245 344,303 352,302 370,285 380,245 388,226'] },
];

const tdi = document.getElementById('tdi');
for (const curve of curves) {
  const points = curve.parts.map((part, n) => part.split(' ').map(pair => {
    const [x, y] = pair.split(',').map(Number);
    return Math.round(stretches[n].x + x / stretches[n].k) + ',' + Math.round(730 + y / 3);
  }).join(' ')).join(' ');
  add(tdi, 'polyline', { points, stroke: curve.color, 'stroke-width': curve.width, 'stroke-dasharray': curve.dash || 'none' });
}
```
